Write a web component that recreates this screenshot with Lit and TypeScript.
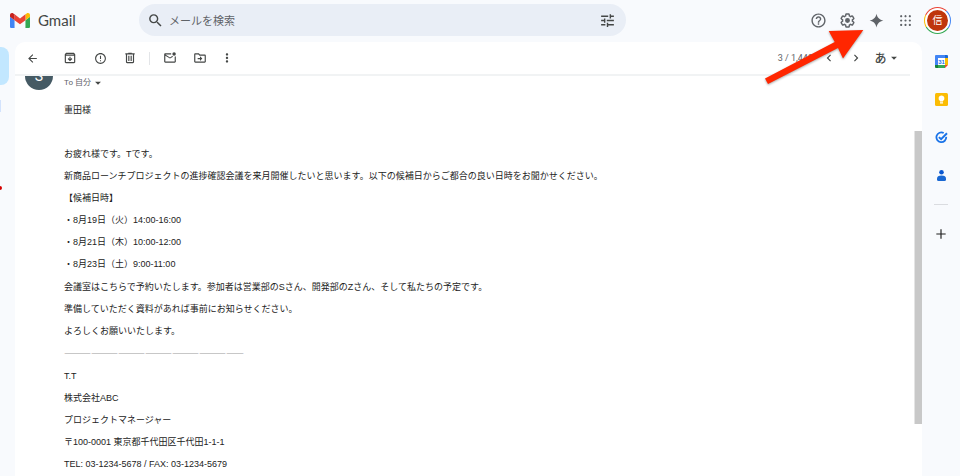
import { LitElement, html, css, svg, nothing } from "lit";
import { customElement, property } from "lit/decorators.js";

const ICONS: Record<string, string> = {
  search:
    "M15.5 14h-.79l-.28-.27A6.47 6.47 0 0 0 16 9.5 6.5 6.5 0 1 0 9.5 16c1.61 0 3.09-.59 4.23-1.57l.27.28v.79l5 4.99L20.49 19l-4.99-5zm-6 0C7.01 14 5 11.99 5 9.5S7.01 5 9.5 5 14 7.01 14 9.5 11.99 14 9.5 14z",
  tune: "M3 17v2h6v-2H3zM3 5v2h10V5H3zm10 16v-2h8v-2h-8v-2h-2v6h2zM7 9v2H3v2h4v2h2V9H7zm14 4v-2H11v2h10zm-6-4h2V7h4V5h-4V3h-2v6z",
  help: "M11 18h2v-2h-2v2zm1-16C6.48 2 2 6.48 2 12s4.48 10 10 10 10-4.48 10-10S17.52 2 12 2zm0 18c-4.41 0-8-3.59-8-8s3.59-8 8-8 8 3.59 8 8-3.59 8-8 8zm0-14c-2.21 0-4 1.79-4 4h2c0-1.1.9-2 2-2s2 .9 2 2c0 2-3 1.75-3 5h2c0-2.25 3-2.5 3-5 0-2.21-1.79-4-4-4z",
  settings:
    "M13.85 22.25h-3.7c-.74 0-1.36-.54-1.45-1.27l-.27-1.89c-.27-.14-.53-.29-.79-.46l-1.8.72c-.7.26-1.47-.03-1.81-.65L2.2 15.53c-.35-.66-.2-1.44.36-1.88l1.53-1.19c-.01-.15-.02-.3-.02-.46 0-.15.01-.31.02-.46l-1.52-1.19c-.59-.45-.74-1.26-.37-1.88l1.85-3.19c.34-.62 1.11-.9 1.79-.63l1.81.73c.26-.17.52-.32.78-.46l.27-1.91c.09-.7.71-1.25 1.44-1.25h3.7c.74 0 1.36.54 1.45 1.27l.27 1.89c.27.14.53.29.79.46l1.8-.72c.71-.26 1.48.03 1.82.65l1.84 3.18c.36.66.2 1.44-.36 1.88l-1.52 1.19c.01.15.02.3.02.46s-.01.31-.02.46l1.52 1.19c.56.45.72 1.23.37 1.86l-1.86 3.22c-.34.62-1.11.9-1.8.63l-1.8-.72c-.26.17-.52.32-.78.46l-.27 1.91c-.1.68-.72 1.22-1.46 1.22zm-3.23-2h2.76l.37-2.55.53-.22c.44-.18.88-.44 1.34-.78l.45-.34 2.38.96 1.38-2.4-2.03-1.58.07-.56c.03-.26.06-.51.06-.78s-.03-.53-.06-.78l-.07-.56 2.03-1.58-1.39-2.4-2.39.96-.45-.35c-.42-.32-.87-.58-1.33-.77l-.52-.22-.37-2.55h-2.76l-.37 2.55-.53.21c-.44.19-.88.44-1.34.79l-.45.33-2.38-.95-1.39 2.39 2.03 1.58-.07.56a7 7 0 0 0-.06.79c0 .26.02.53.06.78l.07.56-2.03 1.58 1.38 2.4 2.39-.96.45.35c.43.33.86.58 1.33.77l.53.22.38 2.55zM12 8.5a3.5 3.5 0 1 0 0 7 3.5 3.5 0 1 0 0-7z",
  spark: "M12 1C13.5 7.4 16.6 10.5 23 12 16.6 13.5 13.5 16.6 12 23 10.5 16.6 7.4 13.5 1 12 7.4 10.5 10.5 7.4 12 1z",
  apps: "M4 2a2 2 0 1 0 .01 0zM12 2a2 2 0 1 0 .01 0zM20 2a2 2 0 1 0 .01 0zM4 10a2 2 0 1 0 .01 0zM12 10a2 2 0 1 0 .01 0zM20 10a2 2 0 1 0 .01 0zM4 18a2 2 0 1 0 .01 0zM12 18a2 2 0 1 0 .01 0zM20 18a2 2 0 1 0 .01 0z",
  back: "M20 11H7.83l5.59-5.59L12 4l-8 8 8 8 1.41-1.41L7.83 13H20v-2z",
  archive:
    "M20.54 5.23l-1.39-1.68C18.88 3.21 18.47 3 18 3H6c-.47 0-.88.21-1.16.55L3.46 5.23C3.17 5.57 3 6.02 3 6.5V19c0 1.1.9 2 2 2h14c1.1 0 2-.9 2-2V6.5c0-.48-.17-.93-.46-1.27zM6.24 5h11.52l.83 1H5.42l.82-1zM5 19V8h14v11H5zm11-5.5l-4 4-4-4 1.41-1.41L11 13.67V10h2v3.67l1.59-1.59L16 13.5z",
  report:
    "M11 15h2v2h-2zm0-8h2v6h-2zm1-5C6.48 2 2 6.48 2 12s4.48 10 10 10 10-4.48 10-10S17.52 2 12 2zm0 18c-4.41 0-8-3.59-8-8s3.59-8 8-8 8 3.59 8 8-3.59 8-8 8z",
  trash:
    "M15 4V3H9v1H4v2h1v13c0 1.1.9 2 2 2h10c1.1 0 2-.9 2-2V6h1V4h-5zm2 15H7V6h10v13zM9 8h2v9H9zm4 0h2v9h-2z",
  unread:
    "M22 8.98V18c0 1.1-.9 2-2 2H4c-1.1 0-2-.9-2-2V6c0-1.1.9-2 2-2h10.1c-.1.32-.1.66-.1 1s0 .68.1 1H4l8 5 3.67-2.29c.47.43 1.02.76 1.63.98L12 13 4 8v10h16V9.9c.74-.15 1.42-.48 2-.92zM16 5a3 3 0 1 0 6 0 3 3 0 1 0-6 0z",
  move: "M20 6h-8l-2-2H4c-1.1 0-2 .9-2 2v12c0 1.1.9 2 2 2h16c1.1 0 2-.9 2-2V8c0-1.1-.9-2-2-2zm0 12H4V6h5.17l2 2H20v10zm-8-1l4-4-4-4v3H8v2h4v3z",
  more: "M12 8c1.1 0 2-.9 2-2s-.9-2-2-2-2 .9-2 2 .9 2 2 2zm0 2c-1.1 0-2 .9-2 2s.9 2 2 2 2-.9 2-2-.9-2-2-2zm0 6c-1.1 0-2 .9-2 2s.9 2 2 2 2-.9 2-2-.9-2-2-2z",
  prev: "M15.41 7.41L14 6l-6 6 6 6 1.41-1.41L10.83 12z",
  next: "M10 6L8.59 7.41 13.17 12l-4.58 4.59L10 18l6-6z",
  caret: "M7 10l5 5 5-5z",
  plus: "M20 13h-7v7h-2v-7H4v-2h7V4h2v7h7v2z",
};

const GREETING = ["重田様", "", "お疲れ様です。Tです。", "新商品ローンチプロジェクトの進捗確認会議を来月開催したいと思います。以下の候補日からご都合の良い日時をお聞かせください。", "【候補日時】"];
const DATES = ["・8月19日（火）14:00-16:00", "・8月21日（木）10:00-12:00", "・8月23日（土）9:00-11:00"];
const CLOSING = ["会議室はこちらで予約いたします。参加者は営業部のSさん、開発部のZさん、そして私たちの予定です。", "準備していただく資料があれば事前にお知らせください。", "よろしくお願いいたします。"];
const SEPARATOR = "―".repeat(20);
const SIGNATURE = ["T.T", "株式会社ABC", "プロジェクトマネージャー", "〒100-0001 東京都千代田区千代田1-1-1", "TEL: 03-1234-5678 / FAX: 03-1234-5679"];

@customElement("g-icon")
export class GIcon extends LitElement {
  @property() name = "";
  @property({ type: Number }) size = 14;
  static styles = css`
    :host { display: flex; flex: none; }
    svg { display: block; fill: currentColor; overflow: visible; }
  `;
  render() {
    return html`<svg width=${this.size} height=${this.size} viewBox="0 0 24 24" aria-hidden="true"><path fill-rule="evenodd" d=${ICONS[this.name] ?? ""}></path></svg>`;
  }
}

const reset = css`
  * { box-sizing: border-box; }
  button {
    display: flex; align-items: center; justify-content: center;
    margin: 0; padding: 0; border: 0; background: none; color: inherit; font: inherit; cursor: pointer;
  }
`;

@customElement("app-header")
export class AppHeader extends LitElement {
  static styles = [reset, css`
    :host { display: grid; grid-template-columns: 139px minmax(0, 487px) 1fr; height: 42px; flex: none; color: #5f6368; }
    .brand { display: flex; align-items: center; gap: 8px; height: 40px; padding-left: 10px; color: #444746; text-decoration: none; font-family: Lato, sans-serif; font-size: 15px; }
    .brand svg { display: block; }
    .search { display: flex; align-items: center; height: 32px; margin-top: 4px; padding: 0 10px 0 8px; border-radius: 16px; background: #e9eef6; color: #444746; }
    .search button { width: 17px; height: 24px; }
    .search input { flex: 1; min-width: 0; margin: 0; padding: 0 5px; border: 0; outline: 0; background: none; color: #444746; font: 11px "Noto Sans CJK JP", sans-serif; }
    .search input::placeholder { color: #5f6368; opacity: 1; }
    .actions { display: flex; align-items: center; justify-content: flex-end; height: 40px; padding-right: 9px; }
    .actions button { width: 29px; height: 29px; }
    .actions .avatar { width: 27px; height: 27px; margin-left: 4px; border-radius: 50%;
      background: conic-gradient(#ea4335 0 12%, #4285f4 12% 35%, #34a853 35% 66%, #fbbc04 66% 82%, #ea4335 82%); }
    .face { display: flex; align-items: center; justify-content: center; width: 25px; height: 25px; border: 2px solid #fff; border-radius: 50%; background: #bf360c; color: #fff; font: 10px/1 "Noto Sans CJK JP", sans-serif; }
  `];
  render() {
    return html`
      <a class="brand" href="#">
        <svg width="20" height="15" viewBox="52 42 88 66" aria-hidden="true">
          <path fill="#4285f4" d="M58 108h14V74L52 59v43c0 3.320 2.690 6 6 6"/>
          <path fill="#34a853" d="M120 108h14c3.320 0 6-2.690 6-6V59l-20 15"/>
          <path fill="#fbbc04" d="M120 48v26l20-15v-8c0-7.420-8.470-11.650-14.400-7.200"/>
          <path fill="#ea4335" d="M72 74V48l24 18 24-18v26L96 92"/>
          <path fill="#c5221f" d="M52 51v8l20 15V48l-5.600-4.200c-5.940-4.450-14.400-.22-14.400 7.200"/>
        </svg>
        <span>Gmail</span>
      </a>
      <form class="search" role="search" @submit=${(e: Event) => e.preventDefault()}>
        <button aria-label="検索"><g-icon name="search" size="17"></g-icon></button>
        <input type="text" placeholder="メールを検索" aria-label="メールを検索" />
        <button type="button" aria-label="検索オプション"><g-icon name="tune" size="17"></g-icon></button>
      </form>
      <div class="actions">
        <button aria-label="ヘルプ"><g-icon name="help" size="17"></g-icon></button>
        <button aria-label="設定"><g-icon name="settings" size="17"></g-icon></button>
        <button aria-label="Gemini"><g-icon name="spark" size="15"></g-icon></button>
        <button aria-label="アプリ"><g-icon name="apps" size="13"></g-icon></button>
        <button class="avatar" aria-label="アカウント"><span class="face">信</span></button>
      </div>
    `;
  }
}

@customElement("mail-toolbar")
export class MailToolbar extends LitElement {
  static styles = [reset, css`
    :host { box-sizing: border-box; display: flex; align-items: center; justify-content: space-between; flex: none; height: 34px; margin-right: 12px; padding: 0 9px 0 2px; border-bottom: 2px solid #f1f3f4; color: #444746; }
    .group { display: flex; align-items: center; }
    button { width: 30px; height: 30px; }
    .back { margin-right: 8px; }
    .narrow { width: 24px; }
    .divider { width: 1px; height: 13px; margin: 0 5px 0 4px; background: #e3e5e8; }
    .count { margin-right: 2px; color: #5f6368; font: 9px Roboto, sans-serif; }
    .pager { width: 27px; }
    .input-tool { width: 27px; margin-left: 5px; font: 500 12px/1 "Noto Sans CJK JP", sans-serif; }
  `];
  private button(label: string, icon: string, cls = "", size = 14) {
    return html`<button class=${cls || nothing} aria-label=${label}><g-icon name=${icon} size=${size}></g-icon></button>`;
  }
  render() {
    return html`
      <div class="group">
        ${this.button("戻る", "back", "back", 13)}
        ${this.button("アーカイブ", "archive")}
        ${this.button("迷惑メールを報告", "report", "", 13)}
        ${this.button("削除", "trash")}
        <span class="divider"></span>
        ${this.button("未読にする", "unread")}
        ${this.button("移動", "move")}
        ${this.button("その他", "more", "narrow")}
      </div>
      <div class="group">
        <span class="count">3 / 1,448</span>
        ${this.button("前へ", "prev", "pager")}
        ${this.button("次へ", "next", "pager")}
        <button class="input-tool" aria-label="入力ツール">あ<g-icon name="caret" size="14"></g-icon></button>
      </div>
    `;
  }
}

@customElement("mail-message")
export class MailMessage extends LitElement {
  static styles = [reset, css`
    :host { display: block; flex: 1; min-height: 0; overflow: hidden; position: relative; color: #222; font: 9px/22px "Liberation Sans", "Noto Sans CJK JP", sans-serif; }
    .sender { display: flex; gap: 11px; margin-top: -14px; padding-left: 10px; }
    .avatar { display: flex; align-items: center; justify-content: center; width: 28px; height: 28px; border-radius: 50%; background: #455a64; color: #fff; font: 14px Roboto, sans-serif; }
    .to { align-self: flex-end; height: 14px; color: #5f6368; font: 8px/14px Roboto, "Noto Sans CJK JP", sans-serif; }
    .to g-icon { color: #444746; }
    .body { padding: 9px 24px 0 49px; }
    p, ul { margin: 0; padding: 0; list-style: none; }
    p { min-height: 22px; }
    ul, .closing { margin-bottom: 1px; }
    .separator { font-family: "Noto Sans CJK JP", sans-serif; }
    .thumb { position: absolute; top: 55px; right: 0; width: 8px; height: 293px; border-left: 1px solid #e4e4e4; background: #c8c8c8; }
  `];
  render() {
    const lines = (items: string[]) => items.map((t) => html`<p>${t}</p>`);
    return html`
      <div class="sender">
        <span class="avatar">S</span>
        <button class="to">To 自分<g-icon name="caret" size="14"></g-icon></button>
      </div>
      <div class="body">
        <div>${lines(GREETING)}</div>
        <ul>${DATES.map((t) => html`<li>${t}</li>`)}</ul>
        <div class="closing">${lines(CLOSING)}</div>
        <div><p class="separator">${SEPARATOR}</p>${lines(SIGNATURE)}</div>
      </div>
      <span class="thumb"></span>
    `;
  }
}

@customElement("side-panel")
export class SidePanel extends LitElement {
  static styles = [reset, css`
    :host { display: flex; flex-direction: column; align-items: center; flex: none; width: 38px; }
    button { width: 38px; height: 38px; color: #1f1f1f; }
    svg { display: block; }
    .day { font: 700 6px "Liberation Sans", sans-serif; fill: #1a73e8; }
    .rule { width: 14px; height: 1px; margin: 10px 0; background: #dadce0; }
  `];
  render() {
    return html`
      <button aria-label="カレンダー">
        <svg width="13" height="13" viewBox="0 0 13 13">
          <path fill="#4285f4" d="M1 0h9v3H3v7H0V1a1 1 0 0 1 1-1z"/>
          <path fill="#1967d2" d="M10 0h2a1 1 0 0 1 1 1v2h-3z"/>
          <path fill="#fbbc04" d="M10 3h3v7h-3z"/>
          <path fill="#34a853" d="M3 10h7v3H3z"/>
          <path fill="#188038" d="M0 10h3v3H1a1 1 0 0 1-1-1z"/>
          <path fill="#ea4335" d="M10 10h3l-3 3z"/>
          <path fill="#fff" d="M3 3h7v7H3z"/>
          <text class="day" x="6.500" y="8.700" text-anchor="middle">31</text>
        </svg>
      </button>
      <button aria-label="Keep">
        <svg width="13" height="13" viewBox="0 0 13 13">
          <rect width="13" height="13" rx="1.500" fill="#fbbc04"/>
          <path fill="#fff" d="M6.500 2.500a2.900 2.900 0 0 1 1.500 5.400V8.500H5V7.900A2.900 2.900 0 0 1 6.500 2.500zM5 9.200h3v1.300H5z"/>
        </svg>
      </button>
      <button aria-label="ToDo リスト">
        <svg width="13" height="13" viewBox="0 0 13 13" fill="none" stroke="#1a73e8" stroke-width="1.800">
          <path d="M8.700 2A4.900 4.900 0 1 0 11.200 5.800"/>
          <path d="M3.900 6.100l2.200 2.100 5.900-6" stroke-width="2"/>
        </svg>
      </button>
      <button aria-label="連絡先">
        <svg width="13" height="13" viewBox="0 0 13 13">
          <circle cx="6.500" cy="3.200" r="2.300" fill="#0b57d0"/>
          <path fill="#1967d2" d="M2 9.500C2 7.500 3.500 6.400 6.500 6.400S11 7.500 11 9.500v.9a1.500 1.500 0 0 1-1.500 1.500h-6A1.500 1.500 0 0 1 2 10.400z"/>
        </svg>
      </button>
      <span class="rule"></span>
      <button aria-label="アドオンを取得"><g-icon name="plus" size="14"></g-icon></button>
    `;
  }
}

@customElement("app-root")
export class AppRoot extends LitElement {
  static styles = css`
    :host { display: flex; flex-direction: column; position: relative; height: 100vh; overflow: hidden; background: #f8fafd; }
    .columns { display: flex; flex: 1; min-height: 0; }
    .rail { display: flex; flex-direction: column; align-items: flex-start; flex: none; width: 15px; overflow: hidden; }
    .compose { width: 9px; height: 38px; margin-top: 5px; border-radius: 0 8px 8px 0; background: #c2e7ff; }
    .selected { width: 1px; height: 12px; margin-top: 15px; background: #d3e3fd; }
    .dot { width: 2px; height: 4px; margin-top: 74px; border-radius: 0 2px 2px 0; background: #d50000; }
    main { display: flex; flex-direction: column; flex: 1; min-width: 0; border-radius: 10px 10px 0 0; background: #fff; overflow: hidden; }
    .arrow { position: absolute; top: 24px; right: 92px; filter: drop-shadow(0 1px 1px rgba(0, 0, 0, 0.35)); pointer-events: none; }
  `;
  render() {
    return html`
      <app-header></app-header>
      <div class="columns">
        <div class="rail"><span class="compose"></span><span class="selected"></span><span class="dot"></span></div>
        <main><mail-toolbar></mail-toolbar><mail-message></mail-message></main>
        <side-panel></side-panel>
      </div>
      <svg class="arrow" width="108" height="66" viewBox="760 24 108 66" aria-hidden="true">
        ${svg`<path fill="#ff2600" d="M765 78.500L834.700 42 828.700 31 863.300 30 843 58.500 838 48 768 84z"/>`}
      </svg>
    `;
  }
}
